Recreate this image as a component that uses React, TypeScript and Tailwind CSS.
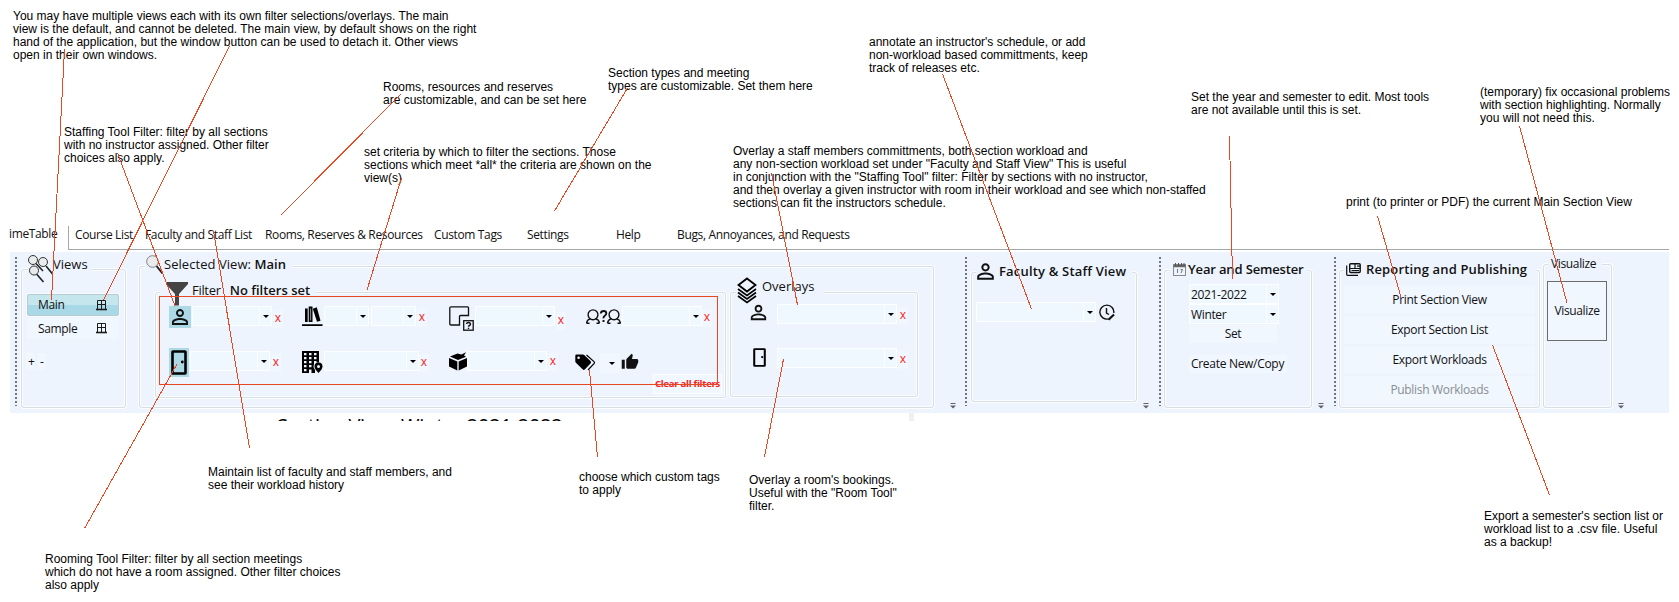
import type { ReactNode } from "react";
import { MdPersonOutline, MdThumbUp } from "react-icons/md";

type Note = { pos: string; lines: string[] };

const notes: Note[] = [
  { pos: "left-[13px] top-[10px]", lines: ["You may have multiple views each with its own filter selections/overlays. The main", "view is the default, and cannot be deleted. The main view, by default shows on the right", "hand of the application, but the window button can be used to detach it. Other views", "open in their own windows."] },
  { pos: "left-[64px] top-[126px]", lines: ["Staffing Tool Filter: filter by all sections", "with no instructor assigned. Other filter", "choices also apply."] },
  { pos: "left-[383px] top-[81px]", lines: ["Rooms, resources and reserves", "are customizable, and can be set here"] },
  { pos: "left-[364px] top-[146px]", lines: ["set criteria by which to filter the sections. Those", "sections which meet *all* the criteria are shown on the", "view(s)"] },
  { pos: "left-[608px] top-[67px]", lines: ["Section types and meeting", "types are customizable. Set them here"] },
  { pos: "left-[733px] top-[145px]", lines: ["Overlay a staff members committments, both section workload and", "any non-section workload set under \"Faculty and Staff View\" This is useful", "in conjunction with the \"Staffing Tool\" filter: Filter by sections with no instructor,", "and then overlay a given instructor with room in their workload and see which non-staffed", "sections can fit the instructors schedule."] },
  { pos: "left-[869px] top-[36px]", lines: ["annotate an instructor's schedule, or add", "non-workload based committments, keep", "track of releases etc."] },
  { pos: "left-[1191px] top-[91px]", lines: ["Set the year and semester to edit. Most tools", "are not available until this is set."] },
  { pos: "left-[1346px] top-[196px]", lines: ["print (to printer or PDF) the current Main Section View"] },
  { pos: "left-[1480px] top-[86px]", lines: ["(temporary) fix occasional problems", "with section highlighting. Normally", "you will not need this."] },
  { pos: "left-[579px] top-[471px]", lines: ["choose which custom tags", "to apply"] },
  { pos: "left-[749px] top-[474px]", lines: ["Overlay a room's bookings.", "Useful with the \"Room Tool\"", "filter."] },
  { pos: "left-[1484px] top-[510px]", lines: ["Export a semester's section list or", "workload list to a .csv file. Useful", "as a backup!"] },
  { pos: "left-[208px] top-[466px]", lines: ["Maintain list of faculty and staff members, and", "see their workload history"] },
  { pos: "left-[45px] top-[553px]", lines: ["Rooming Tool Filter: filter by all section meetings", "which do not have a room assigned. Other filter choices", "also apply"] },
];

const pointers = [
  [64.5, 49, 51.5, 300], [229.5, 46, 103.5, 300], [117.5, 153, 175, 306], [400.5, 94.5, 281, 215],
  [401.5, 178, 367, 290], [627.5, 88, 554.5, 211], [942.5, 74, 1031.5, 309], [771.5, 173, 797.5, 305],
  [1229.5, 136, 1232.5, 279], [1377.5, 216, 1401, 297], [1519.5, 126, 1567, 303], [1492.5, 345, 1549.5, 495],
  [177, 364, 84.5, 528.5], [213.5, 231, 249.5, 448], [589.5, 370, 597.5, 457], [783.5, 359, 764.5, 457],
];

const tabs = [
  ["Course List", "w-[70px]"], ["Faculty and Staff List", "w-[120px]"], ["Rooms, Reserves & Resources", "w-[169px]"],
  ["Custom Tags", "w-[93px]"], ["Settings", "w-[89px]"], ["Help", "w-[61px]"], ["Bugs, Annoyances, and Requests", "w-[200px]"],
];

function Group({ className, children }: { className: string; children: ReactNode }) {
  return (
    <div className={`shrink-0 rounded-[3px] border border-[#d5dfe5] shadow-[0_0_0_1px_#fcfdff,inset_0_0_0_1px_#fcfdff] ${className}`}>
      {children}
    </div>
  );
}

function Grip({ className }: { className: string }) {
  return <div className={`mt-[5px] h-[149px] w-[2px] shrink-0 bg-[repeating-linear-gradient(to_bottom,#72767b_0_2px,transparent_2px_4px)] ${className}`} />;
}

function Overflow({ className }: { className: string }) {
  return (
    <svg className={`mb-[4px] h-[6px] w-[6px] shrink-0 self-end ${className}`} viewBox="0 0 6 6" fill="#606468">
      <rect x="0.5" y="0" width="5" height="1" />
      <path d="M0 2.6h6L3 5.6z" />
    </svg>
  );
}

function Caret() {
  return (
    <svg className="h-[3px] w-[6px]" viewBox="0 0 6 3"><path d="M0 0h6L3 3z" /></svg>
  );
}

function Combo({ className, text }: { className: string; text?: string }) {
  return (
    <div className={`flex h-[20px] shrink-0 border border-[#fdfeff] bg-[#f0f8ff] ${className}`}>
      <div className="min-w-0 flex-1 pl-[1px] leading-[19px]">{text}</div>
      <div className="flex w-[12px] items-center justify-center border-l border-[#fdfeff]"><Caret /></div>
    </div>
  );
}

function Clear({ className }: { className: string }) {
  return <div className={`h-[18px] w-[10px] shrink-0 bg-[#f0f7ff] text-center leading-[16px] tracking-normal text-[#fb1a1a] ${className}`}>x</div>;
}

function WindowIcon() {
  return (
    <svg className="h-[11px] w-[11px]" viewBox="0 0 11 11" fill="none" stroke="#1c1c1c">
      <path d="M1.5 9.5v-9h8v9M5.5 0.5v9M1.5 4.5h8" /><path d="M0 9.5h11" strokeWidth="1.6" />
    </svg>
  );
}

function Lens({ className }: { className: string }) {
  return (
    <svg className={className} viewBox="0 0 18 20" fill="#e9ebec" stroke="#3c3c3c">
      <path d="M10.5 11l6 7.5" strokeWidth="2" stroke="#222" /><circle cx="6.5" cy="6.5" r="5.8" stroke="#777" strokeWidth="0.9" />
    </svg>
  );
}

function Lenses() {
  return (
    <svg className="h-[28px] w-[25px] shrink-0" viewBox="0 0 25 28" fill="#e9ebec" stroke="#333">
      <path d="M8 8.500l7 7.500M18 11l6.500 8M8.500 19l7 8" strokeWidth="1.600" stroke="#222" />
      <circle cx="5" cy="5" r="4.500" /><circle cx="15" cy="7" r="4.500" /><circle cx="6" cy="15.500" r="4.500" />
    </svg>
  );
}

function Funnel() {
  return (
    <svg className="h-[24px] w-[22px] shrink-0" viewBox="0 0 22 24"><path d="M0 0h22v2l-9 10v11.500H9V12L0 2z" fill="#444" /></svg>
  );
}

function Layers() {
  return (
    <svg className="h-[27px] w-[20px] shrink-0" viewBox="0 0 20 27" fill="none" stroke="#000" strokeWidth="1.8">
      <path d="M10 1.500l8.500 6.500L10 14.500 1.500 8z" /><path d="M1 12l9 6.500 9-6.500" strokeWidth="1.600" /><path d="M1 15.500l9 6.500 9-6.500" strokeWidth="1.600" /><path d="M1 19l9 6.500 9-6.500" strokeWidth="1.600" />
    </svg>
  );
}

function Books() {
  return (
    <svg className="ml-[19px] h-[21px] w-[21px] shrink-0" viewBox="0 0 21 21">
      <path d="M0 18.200h20.500V20H0zM3 2.500h2.700V16H3zM6.700.500h3.800V16H6.700z" />
      <path d="M10.800 2.700l4-1.400 3.700 13.400-3.500 1.100z" />
      <path d="M8.600 2.500v12" stroke="#edf4fd" strokeWidth=".6" />
    </svg>
  );
}

function Door({ className, thick }: { className: string; thick: number }) {
  return (
    <svg className={className} viewBox="0 0 16 25" fill="none" stroke="#000" preserveAspectRatio="none">
      <rect x="1.500" y="1.500" width="13" height="22" rx=".5" strokeWidth={thick} /><circle cx="11.300" cy="12" r="1.400" fill="#000" stroke="none" />
    </svg>
  );
}

function RoomType() {
  return (
    <svg className="h-[25px] w-[25px] shrink-0" viewBox="0 0 25 25" fill="none" stroke="#111">
      <path d="M2 .800h16.500q1 0 1 1V9.500h-8q-1 0-1 1v8.500H2q-1.200 0-1.200-1V2Q.800.800 2 .800z" strokeWidth="1.300" />
      <rect x="14.700" y="14.700" width="9.500" height="9.500" strokeWidth="1.300" fill="#edf4fd" />
      <path d="M17.500 18q.3-1.500 2-1.500t2 1.500q0 1-1 1.500t-1 1.300M19.500 21.700v1.300" strokeWidth="1.400" />
    </svg>
  );
}

function People() {
  return (
    <svg className="h-[15px] w-[35px] shrink-0" viewBox="0 0 35 15" fill="none" stroke="#111" strokeWidth="1.400">
      <circle cx="7" cy="5.800" r="4.900" /><path d="M.500 14.200q.5-3.600 3.800-4.300M13.500 14.200q-.5-3.600-3.800-4.300M.500 14.200h3M10.500 14.200h3" />
      <circle cx="28" cy="5.800" r="4.900" /><path d="M21.500 14.200q.5-3.600 3.800-4.300M34.500 14.200q-.5-3.600-3.800-4.300M21.500 14.200h3M31.500 14.200h3" />
      <path d="M14.800 4.500Q15 2 17.600 2t2.700 2.300q0 1.500-1.500 2.400t-1.300 2.600M17.500 11v2" strokeWidth="1.900" />
    </svg>
  );
}

function Building() {
  return (
    <svg className="h-[22px] w-[21px] shrink-0" viewBox="0 0 21 22">
      <path fillRule="evenodd" d="M0 0h17v11.500h-2.500V10H12v3l-.500 3L13 19v3H9.500v-3.500H7V22H0zM2 2v2.200h2.500V2zm5 0v2.200h2.500V2zm5 0v2.200h2.500V2zM2 6v2.200h2.500V6zm5 0v2.200h2.500V6zm5 0v2.200h2.500V6zM2 10v2.200h2.500V10zm5 0v2.200h2.500V10zM2 14v2.200h2.500V14zm5 0v2.200h2.500V14zM2 18v2.200h2.500V18z" />
      <path fillRule="evenodd" d="M16.500 11.500a4 4 0 0 1 4 4q0 2.500-4 6.500-4-4-4-6.500a4 4 0 0 1 4-4zm0 2.500a1.500 1.500 0 1 0 0 3 1.500 1.500 0 0 0 0-3z" />
    </svg>
  );
}

function Cube() {
  return (
    <svg className="h-[19px] w-[18px] shrink-0" viewBox="0 0 18 19">
      <path d="M1 4.500L8.500 1.500l4 1L17 .300 15 3.500l2 1.200L9 8z" /><path d="M0 6l8.300 3.500V18.500L0 14.500zM18 6L9.700 9.500V18.500L18 14.500z" />
    </svg>
  );
}

function Tags() {
  return (
    <svg className="h-[17px] w-[21px] shrink-0" viewBox="0 0 21 17">
      <path fillRule="evenodd" d="M1.500.500h6.300q.8 0 1.400.6l6.300 6q1.200 1.200 0 2.400l-5.500 5.800q-1.200 1.200-2.400 0L.900 8.700Q.300 8 .300 7.300V1.800Q.300.500 1.500.500zM3.600 2.500a1.300 1.300 0 1 0 0 2.600 1.300 1.300 0 0 0 0-2.600z" />
      <path d="M11.500 1l7.500 6.600q1 .9 0 2L13 16" fill="none" stroke="#000" strokeWidth="1.200" />
    </svg>
  );
}

function ClockEdit() {
  return (
    <svg className="ml-[3px] h-[17px] w-[17px] shrink-0" viewBox="0 0 17 17" fill="none" stroke="#111" strokeWidth="1.400">
      <path d="M9.500 14.900A7 7 0 1 1 14.800 9" /><path d="M7.500 4v5l2.500 1.500" /><path d="M9.500 15.800l5.500-5.300" strokeWidth="2.200" />
    </svg>
  );
}

function Calendar() {
  return (
    <svg className="h-[13px] w-[13px] shrink-0" viewBox="0 0 13 13" fill="none" stroke="#8a8a8a">
      <rect x=".500" y="1.500" width="12" height="11" /><path d="M.500 3h12" stroke="#666" strokeWidth="2.500" /><path d="M2.500 0v3M5.500 0v3M8.500 0v3M11 0v3" stroke="#555" />
      <path d="M4.500 6v4M7.500 6.500h2l-1.500 3.500" stroke="#777" />
    </svg>
  );
}

function News() {
  return (
    <svg className="h-[13px] w-[15px] shrink-0" viewBox="0 0 15 13" fill="none" stroke="#111" strokeWidth="1.400">
      <rect x="3.700" y=".700" width="10.500" height="8.800" rx="1" /><path d="M.700 2.500v9q0 .800.800.800H12M4 5.500h10M9 1v4.500M11 3.200h3M5.500 7.500H13" strokeWidth="1.200" />
    </svg>
  );
}

const heading = "text-[13px] leading-[18px] whitespace-nowrap";

export default function App() {
  return (
    <div className="relative h-[602px] w-[1679px] overflow-hidden bg-white font-['Open_Sans',sans-serif] text-[12px] tracking-[-0.36px] text-[#111]">
      <div className="flex flex-col pl-[10px] pt-[226px]">
        <nav className="flex h-[24px] w-[1659px] whitespace-nowrap leading-[18px]">
          <div className="-ml-[1px] w-[59px] leading-[16px]">imeTable</div>
          <div className="flex flex-1 border-b border-l border-[#a5a8aa] pl-[6px]">
            {tabs.map(([name, width]) => <div key={name} className={`shrink-0 ${width}`}>{name}</div>)}
          </div>
        </nav>

        <div className="mt-[2px] flex h-[161px] w-[1659px] items-start bg-[#edf4fd]">
          <Grip className="ml-[5px]" />
          <Group className="ml-[4px] mt-[17px] h-[139px] w-[105px]">
            <div className="-mt-[15px] ml-[6px] flex h-[28px] w-[64px] bg-[#edf4fd]">
              <Lenses />
              <span className={`tracking-normal ${heading}`}>Views</span>
            </div>
            <div className="ml-[5px] mt-[11px] flex h-[22px] w-[92px] items-center justify-between rounded-[2px] border border-[#b7cbd2] bg-[linear-gradient(to_bottom,#c6e6ed_50%,#a9d9e6_50%)] pl-[10px] pr-[11px] shadow-[0_0_0_1px_#f7fbff]">
              <span>Main</span><WindowIcon />
            </div>
            <div className="ml-[5px] mt-[2px] flex h-[21px] w-[92px] items-center justify-between bg-[#f0f7ff] pl-[11px] pr-[12px]">
              <span>Sample</span><WindowIcon />
            </div>
            <div className="ml-[4px] mt-[14px] flex gap-[3px] leading-[17px]">
              <span className="w-[9px] bg-[#f0f7ff] pl-[2px]">+</span><span className="w-[8px] bg-[#f0f7ff] pl-[2px]">-</span>
            </div>
          </Group>

          <Group className="ml-[13px] mt-[14px] h-[142px] w-[795px]">
            <div className="-mt-[12px] ml-[5px] flex h-[22px] w-[148px] bg-[#edf4fd]">
              <Lens className="ml-[1px] h-[20px] w-[18px] shrink-0" />
              <span className={`tracking-[0.05px] ${heading}`}>Selected View: <b className="font-semibold">Main</b></span>
            </div>
            <div className="ml-[15px] mt-[15px] flex items-start">
              <Group className="h-[106px] w-[571px]">
                <div className="-mt-[12px] ml-[5px] flex h-[25px] w-[155px] bg-[#edf4fd]">
                  <div className="ml-[5px] mt-[1px]"><Funnel /></div>
                  <span className={`ml-[4px] tracking-[-0.3px] ${heading}`}>Filter</span>
                  <b className={`ml-[9px] font-semibold tracking-normal ${heading}`}>No filters set</b>
                </div>
                <div className="flex h-[42px] items-start">
                  <div className="ml-[13px] flex h-[22px] w-[22px] shrink-0 items-center justify-center bg-[#add8e6]"><MdPersonOutline className="h-[24px] w-[24px] shrink-0" /></div>
                  <Combo className="ml-[1px] w-[80px]" />
                  <Clear className="ml-[1px] mt-[4px]" />
                  <Books />
                  <Combo className="ml-[1px] w-[45px]" />
                  <Combo className="ml-[2px] w-[45px]" />
                  <Clear className="ml-[1px] mt-[3px]" />
                  <div className="ml-[22px] shrink-0"><RoomType /></div>
                  <Combo className="ml-[1px] w-[80px]" />
                  <Clear className="ml-[1px] mt-[6px]" />
                  <div className="ml-[20px] mt-[3px] shrink-0"><People /></div>
                  <Combo className="ml-[1px] w-[80px]" />
                  <Clear className="mt-[3px]" />
                </div>
                <div className="flex h-[26px] items-start">
                  <div className="ml-[13px] flex h-[29px] w-[20px] shrink-0 items-center justify-center bg-[#add8e6]"><Door className="h-[25px] w-[16px]" thick={2.6} /></div>
                  <Combo className="ml-[1px] mt-[3px] w-[80px]" />
                  <Clear className="ml-[1px] mt-[6px]" />
                  <div className="ml-[21px] mt-[3px] shrink-0"><Building /></div>
                  <Combo className="ml-[1px] mt-[3px] w-[95px]" />
                  <Clear className="mt-[6px]" />
                  <div className="ml-[20px] mt-[4px] shrink-0"><Cube /></div>
                  <Combo className="mt-[3px] w-[80px]" />
                  <Clear className="ml-[1px] mt-[5px]" />
                  <div className="ml-[17px] mt-[6px] shrink-0"><Tags /></div>
                  <div className="ml-[4px] mt-[5px] flex h-[20px] w-[20px] shrink-0 items-center justify-end bg-[#f0f7ff] pr-[5px]"><Caret /></div>
                  <MdThumbUp className="ml-[1px] mt-[5px] h-[18px] w-[18px] shrink-0" />
                </div>
                <div className="ml-auto mr-[3px] flex h-[20px] w-[69px] items-center justify-center border border-[#fdfeff] bg-[#f0f7ff] text-[9.5px] font-bold tracking-[-0.25px] whitespace-nowrap text-[#fb1a1a]">Clear all filters</div>
              </Group>
              <Group className="ml-[4px] h-[105px] w-[188px]">
                <div className="-mt-[16px] ml-[5px] flex h-[27px] w-[88px] bg-[#edf4fd]">
                  <div className="ml-[1px]"><Layers /></div>
                  <span className={`ml-[5px] tracking-normal ${heading}`}>Overlays</span>
                </div>
                <div className="flex h-[44px] items-start">
                  <MdPersonOutline className="-mt-[3px] ml-[16px] h-[23px] w-[23px] shrink-0" />
                  <Combo className="ml-[7px] w-[120px]" />
                  <Clear className="ml-[1px] mt-[3px]" />
                </div>
                <div className="flex items-start">
                  <Door className="ml-[22px] h-[19px] w-[13px] shrink-0" thick={2.5} />
                  <Combo className="ml-[11px] w-[120px]" />
                  <Clear className="ml-[1px] mt-[3px]" />
                </div>
              </Group>
            </div>
          </Group>
          <Overflow className="ml-[16px]" />

          <Grip className="ml-[9px]" />
          <Group className="ml-[4px] mt-[20px] h-[130px] w-[166px]">
            <div className="-mt-[13px] ml-[4px] flex h-[24px] w-[156px] bg-[#edf4fd]">
              <MdPersonOutline className="-ml-[3px] -mt-[1px] h-[25px] w-[25px] shrink-0" />
              <b className={`ml-[1px] mt-[2px] font-semibold tracking-[0.18px] ${heading}`}>Faculty & Staff View</b>
            </div>
            <div className="ml-[4px] mt-[18px] flex items-center"><Combo className="w-[120px]" /><ClockEdit /></div>
          </Group>
          <Overflow className="ml-[6px]" />

          <Grip className="ml-[10px]" />
          <Group className="ml-[3px] mt-[18px] h-[138px] w-[148px]">
            <div className="-mt-[11px] ml-[5px] flex h-[20px] w-[138px] items-start bg-[#edf4fd]">
              <div className="ml-[3px] mt-[3px]"><Calendar /></div>
              <b className={`ml-[2px] font-semibold tracking-[-0.15px] ${heading}`}>Year and Semester</b>
            </div>
            <div className="ml-[24px] mt-[4px] flex flex-col">
              <Combo className="w-[90px]" text="2021-2022" />
              <Combo className="w-[90px]" text="Winter" />
              <div className="mt-[1px] h-[18px] w-[88px] bg-[#f0f7ff] text-center leading-[18px]">Set</div>
              <div className="mt-[12px] h-[18px] w-[98px] bg-[#f0f7ff] pl-[2px] leading-[18px] tracking-[-0.3px]">Create New/Copy</div>
            </div>
          </Group>
          <Overflow className="ml-[6px]" />

          <Grip className="ml-[10px]" />
          <Group className="ml-[3px] mt-[18px] h-[138px] w-[201px]">
            <div className="-mt-[11px] ml-[4px] flex h-[20px] w-[192px] items-start bg-[#edf4fd]">
              <div className="ml-[2px] mt-[3px]"><News /></div>
              <b className={`ml-[5px] font-semibold tracking-[0.15px] ${heading}`}>Reporting and Publishing</b>
            </div>
            <div className="ml-[4px] mt-[6px] flex w-[191px] flex-col gap-[2px] text-center leading-[28px] tracking-[-0.32px]">
              <div className="h-[28px] bg-[#f0f7ff]">Print Section View</div>
              <div className="h-[28px] bg-[#f0f7ff]">Export Section List</div>
              <div className="h-[28px] bg-[#f0f7ff]">Export Workloads</div>
              <div className="h-[28px] bg-[#f0f7ff] text-[#8a8d91]">Publish Workloads</div>
            </div>
          </Group>
          <Group className="ml-[3px] mt-[12px] h-[144px] w-[69px]">
            <div className="-mt-[9px] ml-[4px] h-[16px] w-[54px] bg-[#edf4fd] pl-[3px] leading-[16px]">Visualize</div>
            <div className="ml-[3px] mt-[9px] flex h-[60px] w-[60px] items-center justify-center border border-[#6c6c6c] bg-[#f0f7ff]">Visualize</div>
          </Group>
          <Overflow className="ml-[6px]" />
        </div>

        <div className="flex h-[8px] items-end">
          <div className="ml-[267px] h-[2px] w-[632px] overflow-hidden text-[20px] leading-[20px] tracking-[-0.25px] whitespace-nowrap text-black">
            <div className="-mt-[3px]">Section View: Winter 2021-2022</div>
          </div>
          <div className="h-[8px] w-[5px] bg-[#f0f0f0]" />
        </div>
      </div>

      {notes.map((note) => (
        <div key={note.pos} className={`absolute font-['Liberation_Sans',sans-serif] text-[12px] leading-[13px] tracking-normal whitespace-nowrap text-black ${note.pos}`}>
          {note.lines.map((line) => <div key={line}>{line}</div>)}
        </div>
      ))}

      <svg className="pointer-events-none absolute left-0 top-0 h-[602px] w-[1679px]" viewBox="0 0 1679 602" fill="none" stroke="#e8481f" shapeRendering="crispEdges">
        <rect x="159.500" y="296.500" width="558" height="88" />
        {pointers.map(([x1, y1, x2, y2]) => <line key={`${x1}-${y1}`} x1={x1} y1={y1} x2={x2} y2={y2} />)}
      </svg>
    </div>
  );
}
